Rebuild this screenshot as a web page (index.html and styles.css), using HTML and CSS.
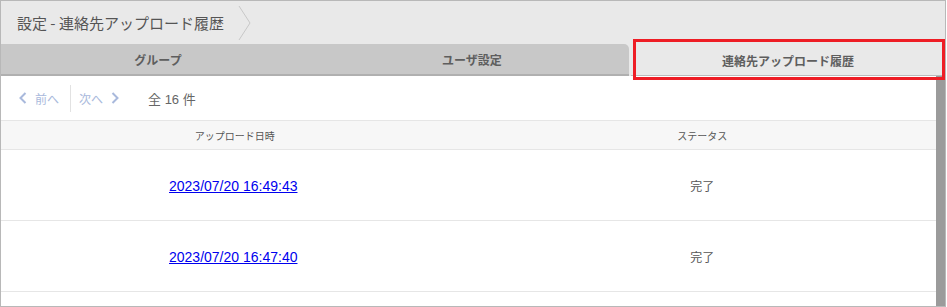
FILE: index.html
```html
<!DOCTYPE html>
<html lang="ja">
<head>
<meta charset="utf-8">
<link rel="stylesheet" href="styles.css">
</head>
<body>
<div class="frame">
  <header class="head">
    <span class="title">設定 - 連絡先アップロード履歴</span>
    <svg class="crumb" width="14" height="36" viewBox="0 0 14 36"><path d="M1 1 L12 18 L1 35" fill="none" stroke="#c8c8c8" stroke-width="1"/></svg>
  </header>
  <nav class="tabs">
    <div class="tab first">グループ</div>
    <div class="tab second">ユーザ設定</div>
    <div class="tab active">連絡先アップロード履歴</div>
    <div class="mark"></div>
  </nav>
  <div class="body">
    <main class="main">
      <div class="pager">
        <span class="pg prev"><svg width="8" height="12" viewBox="0 0 8 12"><path d="M6.5 1 L1.5 6 L6.5 11" fill="none" stroke="#a9b9dc" stroke-width="2"/></svg>前へ</span>
        <span class="sep"></span>
        <span class="pg next">次へ<svg width="8" height="12" viewBox="0 0 8 12"><path d="M1.5 1 L6.5 6 L1.5 11" fill="none" stroke="#a9b9dc" stroke-width="2"/></svg></span>
        <span class="count">全 16 件</span>
      </div>
      <div class="thead">
        <div class="cell">アップロード日時</div>
        <div class="cell">ステータス</div>
      </div>
      <div class="row">
        <div class="cell"><a href="#">2023/07/20 16:49:43</a></div>
        <div class="cell status">完了</div>
      </div>
      <div class="row">
        <div class="cell"><a href="#">2023/07/20 16:47:40</a></div>
        <div class="cell status">完了</div>
      </div>
      <div class="row"></div>
    </main>
    <div class="scroll"></div>
  </div>
</div>
</body>
</html>
```
FILE: styles.css
```css
* { box-sizing: border-box; }
html, body { margin: 0; padding: 0; background: #fff; }
body { font-family: "Liberation Sans", "Noto Sans CJK JP", sans-serif; }
.frame {
  width: 946px; height: 307px; overflow: hidden;
  border: 1px solid #b8b8b8;
  display: flex; flex-direction: column;
  background: #fff;
}
.head {
  height: 43px; flex: none;
  background: #e9e9e9;
  display: flex; align-items: center;
  padding-left: 16px;
}
.title { font-size: 15px; color: #555; font-family: "Noto Sans CJK JP", sans-serif; margin-top: -1px; }
.crumb { margin-left: 14px; }
.tabs {
  position: relative;
  height: 32px; flex: none;
  background: #e9e9e9;
  display: flex;
}
.tab {
  flex: 1;
  background: #c8c8c8;
  border-bottom: 2px solid #b0b0b0;
  display: flex; align-items: center; justify-content: center;
  font-family: "Noto Sans CJK JP", sans-serif;
  font-weight: bold; font-size: 12px; color: #5e5e5e;
  padding-top: 1px;
}
.tab.first { border-radius: 0 0 0 0; }
.tab.second { border-radius: 0 5px 0 0; }
.tab.active { background: #e9e9e9; border-bottom: 1px solid #bcbcbc; margin-left: 2px; }
.mark {
  position: absolute; left: 632px; top: -5px; width: 312px; height: 41px;
  border: 3px solid #ee1d25;
}
.body { flex: 1; display: flex; min-height: 0; }
.main { flex: 1; display: flex; flex-direction: column; }
.scroll { width: 9px; background: #9b9b9b; flex: none; }
.pager {
  height: 44px; flex: none;
  display: flex; align-items: center;
  padding-left: 18px;
  font-family: "Noto Sans CJK JP", sans-serif;
  font-size: 12px; color: #a9b9dc;
}
.pg { display: flex; align-items: center; gap: 8px; }
.sep { width: 1px; height: 27px; background: #e2e2e2; margin: 0 8px 0 11px; }
.count { margin-left: 29px; font-size: 13px; color: #666; font-family: "Liberation Sans", "Noto Sans CJK JP", sans-serif; }
.thead {
  height: 30px; flex: none;
  background: #f7f7f7;
  border-top: 1px solid #e6e6e6;
  border-bottom: 1px solid #e6e6e6;
  display: flex;
  font-family: "Noto Sans CJK JP", sans-serif;
  font-size: 10px; color: #555;
}
.cell { flex: 1; display: flex; align-items: center; justify-content: center; }
.row {
  height: 71px; flex: none;
  border-bottom: 1px solid #e6e6e6;
  display: flex;
}
.row a { color: #0000ee; text-decoration: underline; font-size: 14px; margin-left: -3px; padding-top: 2px; }
.status { font-family: "Noto Sans CJK JP", sans-serif; font-size: 12px; color: #555; }
```
